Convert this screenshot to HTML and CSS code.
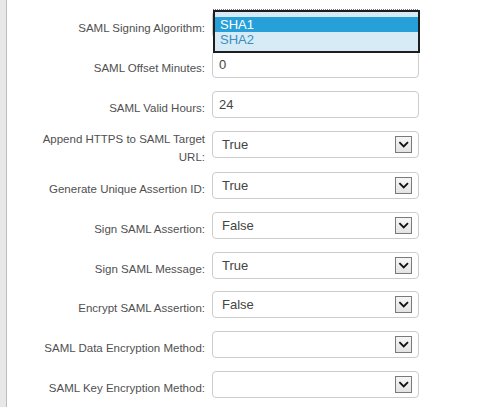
FILE: index.html
```html
<!DOCTYPE html>
<html lang="en">
<head>
<meta charset="utf-8">
<title>SAML Settings</title>
<link rel="stylesheet" href="styles.css">
</head>
<body>
<div class="page">
  <div class="sidebar"></div>
  <form class="form">
    <div class="row">
      <label class="label">SAML Signing Algorithm:</label>
      <div class="field">
        <div class="select focused">
          <span class="value"></span>
          <span class="btn"><svg width="15" height="15" viewBox="0 0 15 15"><path d="M3.4 5.2 L7.7 9.5 L12 5.2" fill="none" stroke="#111" stroke-width="1.8"/></svg></span>
          <div class="popup">
            <div class="opt selected">SHA1</div>
            <div class="opt">SHA2</div>
          </div>
        </div>
      </div>
    </div>
    <div class="row">
      <label class="label">SAML Offset Minutes:</label>
      <div class="field"><div class="input">0</div></div>
    </div>
    <div class="row">
      <label class="label">SAML Valid Hours:</label>
      <div class="field"><div class="input">24</div></div>
    </div>
    <div class="row">
      <label class="label">Append HTTPS to SAML Target URL:</label>
      <div class="field">
        <div class="select"><span class="value">True</span><span class="btn"><svg width="15" height="15" viewBox="0 0 15 15"><path d="M3.4 5.2 L7.7 9.5 L12 5.2" fill="none" stroke="#111" stroke-width="1.8"/></svg></span></div>
      </div>
    </div>
    <div class="row">
      <label class="label">Generate Unique Assertion ID:</label>
      <div class="field">
        <div class="select"><span class="value">True</span><span class="btn"><svg width="15" height="15" viewBox="0 0 15 15"><path d="M3.4 5.2 L7.7 9.5 L12 5.2" fill="none" stroke="#111" stroke-width="1.8"/></svg></span></div>
      </div>
    </div>
    <div class="row">
      <label class="label">Sign SAML Assertion:</label>
      <div class="field">
        <div class="select"><span class="value">False</span><span class="btn"><svg width="15" height="15" viewBox="0 0 15 15"><path d="M3.4 5.2 L7.7 9.5 L12 5.2" fill="none" stroke="#111" stroke-width="1.8"/></svg></span></div>
      </div>
    </div>
    <div class="row">
      <label class="label">Sign SAML Message:</label>
      <div class="field">
        <div class="select"><span class="value">True</span><span class="btn"><svg width="15" height="15" viewBox="0 0 15 15"><path d="M3.4 5.2 L7.7 9.5 L12 5.2" fill="none" stroke="#111" stroke-width="1.8"/></svg></span></div>
      </div>
    </div>
    <div class="row">
      <label class="label">Encrypt SAML Assertion:</label>
      <div class="field">
        <div class="select"><span class="value">False</span><span class="btn"><svg width="15" height="15" viewBox="0 0 15 15"><path d="M3.4 5.2 L7.7 9.5 L12 5.2" fill="none" stroke="#111" stroke-width="1.8"/></svg></span></div>
      </div>
    </div>
    <div class="row">
      <label class="label">SAML Data Encryption Method:</label>
      <div class="field">
        <div class="select"><span class="value"></span><span class="btn"><svg width="15" height="15" viewBox="0 0 15 15"><path d="M3.4 5.2 L7.7 9.5 L12 5.2" fill="none" stroke="#111" stroke-width="1.8"/></svg></span></div>
      </div>
    </div>
    <div class="row">
      <label class="label">SAML Key Encryption Method:</label>
      <div class="field">
        <div class="select"><span class="value"></span><span class="btn"><svg width="15" height="15" viewBox="0 0 15 15"><path d="M3.4 5.2 L7.7 9.5 L12 5.2" fill="none" stroke="#111" stroke-width="1.8"/></svg></span></div>
      </div>
    </div>
  </form>
</div>
</body>
</html>
```
FILE: styles.css
```css
html, body {
  margin: 0;
  padding: 0;
  background: #ffffff;
  overflow: hidden;
}

.page {
  display: flex;
  min-height: 100vh;
  font-family: "Liberation Sans", Arial, sans-serif;
}

.sidebar {
  width: 6px;
  background: #e8e8e8;
  border-right: 1px solid #bdbdbd;
  flex: none;
}

.form {
  padding: 8px 0 0 28px;
  margin: 0;
}

.row {
  display: flex;
  align-items: center;
  padding: 3px 0 2.75px;
}

.label {
  width: 170px;
  flex: none;
  text-align: right;
  font-size: 11.5px;
  line-height: 18px;
  color: #505050;
}

.field {
  width: 207px;
  flex: none;
  margin-left: 7px;
  margin-bottom: 7px;
}

.input,
.select {
  box-sizing: border-box;
  height: 27px;
  border: 1px solid #cccccc;
  border-radius: 4px;
  background: #ffffff;
  display: flex;
  align-items: center;
  font-size: 13px;
  color: #444444;
}

.input {
  padding-left: 6px;
}

.select {
  position: relative;
  padding-left: 9px;
  padding-right: 6px;
}

.value {
  flex: 1;
}

.btn {
  box-sizing: border-box;
  width: 17px;
  height: 17px;
  border: 1px solid #7a7a7a;
  background: linear-gradient(#f6f6f6, #e3e3e3);
  display: flex;
  align-items: center;
  justify-content: center;
}

.btn svg {
  display: block;
}

.popup {
  position: absolute;
  left: 0px;
  top: -2px;
  width: 207px;
  box-sizing: border-box;
  border: 2px solid #1e1e1e;
  background: #d7ebf6;
  padding: 5px 0 4px;
  z-index: 2;
}

.popup::before {
  content: "";
  position: absolute;
  left: -2px;
  top: -3px;
  width: 205px;
  border-top: 1px dotted #7a7a7a;
}

.opt {
  font-size: 13px;
  line-height: 15px;
  height: 15px;
  padding-left: 5px;
  color: #3a8fc2;
}

.opt.selected {
  background: #279fd9;
  color: #ffffff;
}
```
